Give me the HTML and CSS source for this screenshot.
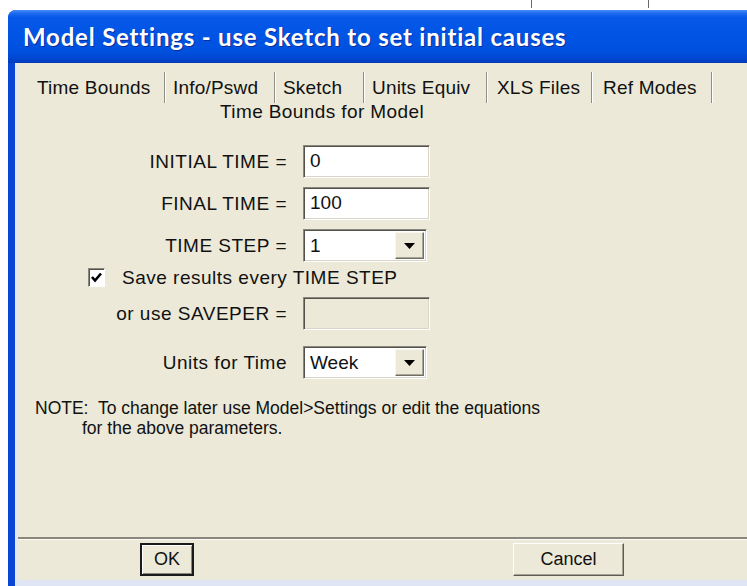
FILE: index.html
```html
<!DOCTYPE html>
<html lang="en">
<head>
<meta charset="utf-8">
<title>Model Settings</title>
<link rel="stylesheet" href="styles.css">
</head>
<body>
<span class="tick tick-a"></span>
<span class="tick tick-b"></span>
<div class="window">
  <div class="titlebar">Model Settings - use Sketch to set initial causes</div>
  <div class="client">
    <div class="tabs">
      <div class="tab tab-time">Time Bounds</div>
      <div class="tab tab-info">Info/Pswd</div>
      <div class="tab tab-sketch">Sketch</div>
      <div class="tab tab-units">Units Equiv</div>
      <div class="tab tab-xls">XLS Files</div>
      <div class="tab tab-ref">Ref Modes</div>
    </div>

    <div class="page">
      <div class="heading">Time Bounds for Model</div>

      <div class="row row-first">
        <label class="label">INITIAL TIME =</label>
        <div class="field">0</div>
      </div>
      <div class="row">
        <label class="label">FINAL TIME =</label>
        <div class="field">100</div>
      </div>
      <div class="row">
        <label class="label">TIME STEP =</label>
        <div class="field combo">
          <span class="combo-value">1</span>
          <span class="combo-btn"><svg width="11" height="6" viewBox="0 0 11 6"><path d="M0 0 H11 L5.5 6 Z" fill="#000"/></svg></span>
        </div>
      </div>

      <div class="check-row">
        <span class="checkbox"><svg width="13" height="13" viewBox="0 0 13 13"><path d="M2 6 L5 9.5 L11 2.5" fill="none" stroke="#000" stroke-width="2.6"/></svg></span>
        <span class="check-text">Save results every TIME STEP</span>
      </div>

      <div class="row row-saveper">
        <label class="label">or use SAVEPER =</label>
        <div class="field disabled"></div>
      </div>
      <div class="row row-units">
        <label class="label">Units for Time</label>
        <div class="field combo">
          <span class="combo-value">Week</span>
          <span class="combo-btn"><svg width="11" height="6" viewBox="0 0 11 6"><path d="M0 0 H11 L5.5 6 Z" fill="#000"/></svg></span>
        </div>
      </div>

      <div class="note">
        <div>NOTE:&nbsp; To change later use Model&gt;Settings or edit the equations</div>
        <div class="note-indent">for the above parameters.</div>
      </div>
    </div>

    <div class="footer">
      <button class="btn btn-ok">OK</button>
      <button class="btn btn-cancel">Cancel</button>
    </div>
  </div>
</div>
</body>
</html>
```

FILE: styles.css
```css
html, body {
  margin: 0;
  padding: 0;
}

body {
  position: relative;
  width: 747px;
  height: 586px;
  overflow: hidden;
  background: #ffffff;
  font-family: "Liberation Sans", Arial, sans-serif;
  font-size: 19px;
  color: #111;
}

/* small marks on the desktop above the window */
.tick {
  position: absolute;
  top: 0;
  width: 1px;
  height: 8px;
  background: #6a6a6a;
}
.tick-a { left: 531px; }
.tick-b { left: 648px; }

.window {
  margin: 10px 0 0 8px;
  height: 576px;
  display: flex;
  flex-direction: column;
  background: #0a45d6;
  border-radius: 8px 0 0 0;
  overflow: hidden;
}

.titlebar {
  height: 53px;
  flex: none;
  box-sizing: border-box;
  padding: 12px 0 0 15px;
  font-family: Lato, "Open Sans", sans-serif;
  font-weight: 700;
  font-size: 24px;
  line-height: 30px;
  letter-spacing: 0.8px;
  white-space: nowrap;
  color: #ffffff;
  text-shadow: 1px 1px 0 #0b2c9a;
  background: linear-gradient(to bottom,
    #4a8cf6 0%, #1f6cf0 6%, #0658e8 14%, #0054e4 50%,
    #0050dd 80%, #0044cc 94%, #0638b4 100%);
}

.client {
  flex: 1;
  margin-left: 7px;
  display: flex;
  flex-direction: column;
  background: #ece9d8;
  border-left: 3px solid #e2e8f4;
  border-bottom: 6px solid #dfe5f5;
}

/* tab strip */
.tabs {
  height: 40px;
  flex: none;
  display: flex;
  padding-left: 10px;
}

.tab {
  box-sizing: border-box;
  margin-top: 9px;
  height: 31px;
  line-height: 31px;
  padding-left: 8px;
  white-space: nowrap;
  border-right: 1px solid #8e8d86;
  box-shadow: 1px 0 0 #ffffff;
  letter-spacing: 0.2px;
}
.tab-time   { width: 137px; padding-left: 9px; }
.tab-info   { width: 110px; }
.tab-sketch { width: 89px; }
.tab-units  { width: 123px; }
.tab-xls    { width: 105px; padding-left: 10px; }
.tab-ref    { width: 120px; padding-left: 11px; }

.page {
  flex: 1;
}

.heading {
  margin: -2px 0 0 202px;
  line-height: 22px;
  letter-spacing: 0.4px;
}

.row {
  display: grid;
  grid-template-columns: 269px 127px;
  column-gap: 16px;
  align-items: center;
  height: 33px;
  margin-top: 9px;
}
.row-first { margin-top: 22px; }
.row-saveper { margin-top: 10px; }
.row-units { margin-top: 16px; }

.label {
  text-align: right;
  white-space: nowrap;
  letter-spacing: 0.5px;
}

/* sunken edit box */
.field {
  box-sizing: border-box;
  height: 33px;
  padding-left: 6px;
  line-height: 29px;
  background: #ffffff;
  border: 1px solid;
  border-color: #8a887e #ffffff #ffffff #8a887e;
  box-shadow: inset 1px 1px 0 #555249, inset -1px -1px 0 #d8d4c6;
}
.field.disabled {
  background: #ece9d8;
}

.combo {
  width: 124px;
  display: flex;
  align-items: center;
  padding-right: 2px;
}
.combo-value {
  flex: 1;
}
.combo-btn {
  box-sizing: border-box;
  width: 29px;
  height: 27px;
  display: flex;
  align-items: center;
  justify-content: center;
  background: #ece9d8;
  border: 1px solid;
  border-color: #f7f6f0 #6f6d64 #6f6d64 #f7f6f0;
  box-shadow: inset -1px -1px 0 #a9a698;
}

.check-row {
  display: flex;
  align-items: center;
  height: 19px;
  margin: 6px 0 0 70px;
}

.checkbox {
  box-sizing: border-box;
  width: 17px;
  height: 19px;
  display: flex;
  align-items: center;
  justify-content: center;
  background: #ffffff;
  border: 1px solid;
  border-color: #8a887e #ffffff #ffffff #8a887e;
  box-shadow: inset 1px 1px 0 #555249;
}

.check-text {
  margin-left: 17px;
  letter-spacing: 0.5px;
}

.note {
  margin: 19px 0 0 17px;
  line-height: 20px;
  font-size: 17.5px;
}
.note-indent {
  padding-left: 47px;
}

/* dialog buttons */
.footer {
  flex: none;
  height: 41px;
  display: flex;
  align-items: flex-start;
  border-top: 2px solid #8a887c;
  box-shadow: inset 0 1px 0 #fbfaf5;
}

.btn {
  box-sizing: border-box;
  margin-top: 4px;
  height: 33px;
  padding: 0;
  font-family: "Liberation Sans", Arial, sans-serif;
  font-size: 18px;
  color: #111;
  background: #ece9d8;
  border: 1px solid;
  border-color: #ffffff #5d5b53 #5d5b53 #ffffff;
  box-shadow: inset -1px -1px 0 #a6a394;
}
.btn-ok {
  width: 54px;
  margin-left: 122px;
  border: 2px solid #1a1a1a;
  box-shadow: inset 1px 1px 0 #ffffff, inset -1px -1px 0 #8a887c;
}
.btn-cancel {
  width: 111px;
  margin-left: 319px;
}
```
